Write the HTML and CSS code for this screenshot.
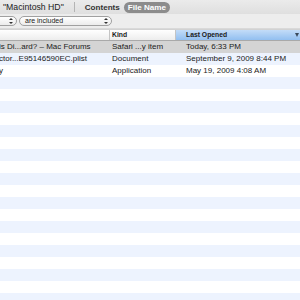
FILE: index.html
```html
<!DOCTYPE html>
<html lang="en">
<head>
    <meta charset="UTF-8">
    <title>Search Results</title>
    <link rel="stylesheet" href="styles.css">
</head>
<body>

    <div class="search-bar">
        <span class="scope">"Macintosh HD"</span>
        <span class="divider"></span>
        <span class="scope-btn">Contents</span>
        <span class="scope-btn active">File Name</span>
    </div>

    <div class="criteria-bar">
        <div class="popup first"><span class="arrows"></span></div>
        <div class="popup second">are included<span class="arrows"></span></div>
    </div>

    <div class="list">
        <div class="list-header">
            <div class="col name"></div>
            <div class="col kind">Kind</div>
            <div class="col opened sorted">Last Opened<span class="sort-arrow"></span></div>
        </div>

        <div class="row selected">
            <div class="col name">is Di...ard? – Mac Forums</div>
            <div class="col kind">Safari ...y item</div>
            <div class="col opened">Today, 6:33 PM</div>
        </div>
        <div class="row">
            <div class="col name">ctor...E95146590EC.plist</div>
            <div class="col kind">Document</div>
            <div class="col opened">September 9, 2009 8:44 PM</div>
        </div>
        <div class="row">
            <div class="col name">y</div>
            <div class="col kind">Application</div>
            <div class="col opened">May 19, 2009 4:08 AM</div>
        </div>

        <!-- empty stripes to fill the window -->
        <div class="row"></div><div class="row"></div><div class="row"></div>
        <div class="row"></div><div class="row"></div><div class="row"></div>
        <div class="row"></div><div class="row"></div><div class="row"></div>
        <div class="row"></div><div class="row"></div><div class="row"></div>
        <div class="row"></div><div class="row"></div><div class="row"></div>
        <div class="row"></div><div class="row"></div><div class="row"></div>
        <div class="row"></div>
    </div>

</body>
</html>
```

FILE: styles.css
```css
/* Finder search window, cropped */

:root {
    --stripe: #edf3fe;
    --text: #1a1a1a;
}

body {
    margin: 0;
    width: 300px;
    height: 300px;
    overflow: hidden;
    background: #ffffff;
    font-family: 'Liberation Sans', Arial, sans-serif;
    color: var(--text);
}

/* --- search bar --- */
.search-bar {
    height: 14px;
    display: flex; align-items: center;
    background: linear-gradient(#ebebeb, #dfdfdf);
    font-size: 8.7px;
}
.scope { margin-left: 3px; color: #222; }
.divider {
    width: 1px; height: 10px; background: #b4b4b4;
    margin: 0 10px 0 10px;
}
.scope-btn {
    font-weight: bold; font-size: 8.1px; color: #333;
    line-height: 9px; border-radius: 6px;
}
.scope-btn.active {
    margin-left: 4px; padding: 1px 4px;
    background: #8c8c8c; color: #fff;
}

/* --- criteria row --- */
.criteria-bar {
    height: 14px;
    display: flex; align-items: center;
    background: #ededed;
    border-bottom: 1px solid #d9d9d9;
}
.popup {
    position: relative; height: 8px;
    border: 1px solid #a0a0a0; border-radius: 5px;
    background: linear-gradient(#ffffff, #ececec);
    font-size: 7px; line-height: 8px;
}
.popup.first { width: 20px; margin-left: -5px; }
.popup.second { width: 86px; margin-left: 2px; padding-left: 5px; }
.arrows {
    position: absolute; right: 3px; top: 1px;
    width: 4px; height: 6px;
}
.arrows::before, .arrows::after {
    content: ""; position: absolute; left: 0;
    border-left: 2px solid transparent; border-right: 2px solid transparent;
}
.arrows::before { top: 0; border-bottom: 2px solid #333; }
.arrows::after { bottom: 0; border-top: 2px solid #333; }

/* --- list --- */
.list-header {
    display: flex; height: 10px;
    background: linear-gradient(#ffffff, #ededed);
    border-top: 1px solid #d2d2d2;
    border-bottom: 1px solid #a9a9a9;
    font-size: 6.8px; font-weight: bold; line-height: 10px;
}
.list-header .col { border-right: 1px solid #c4c4c4; box-sizing: border-box; }
.list-header .sorted {
    position: relative; border-right: none;
    background: linear-gradient(#c3dcf8, #92bff0);
}
.sort-arrow {
    position: absolute; right: 1px; top: 3px;
    border-left: 2.5px solid transparent; border-right: 2.5px solid transparent;
    border-top: 4px solid #3a4a5c;
}

.row {
    display: flex; height: 12px;
    font-size: 8px; line-height: 12px;
    white-space: nowrap;
}
.row:nth-child(odd) { background: var(--stripe); }
.row.selected { background: #d4d4d4; }

.col { overflow: hidden; }
.col.name { width: 111px; margin-left: -1px; }
.col.kind { width: 66px; padding-left: 2px; box-sizing: border-box; }
.col.opened { flex: 1; padding-left: 10px; }
.list-header .col.name { margin-left: 0; width: 110px; }
```
